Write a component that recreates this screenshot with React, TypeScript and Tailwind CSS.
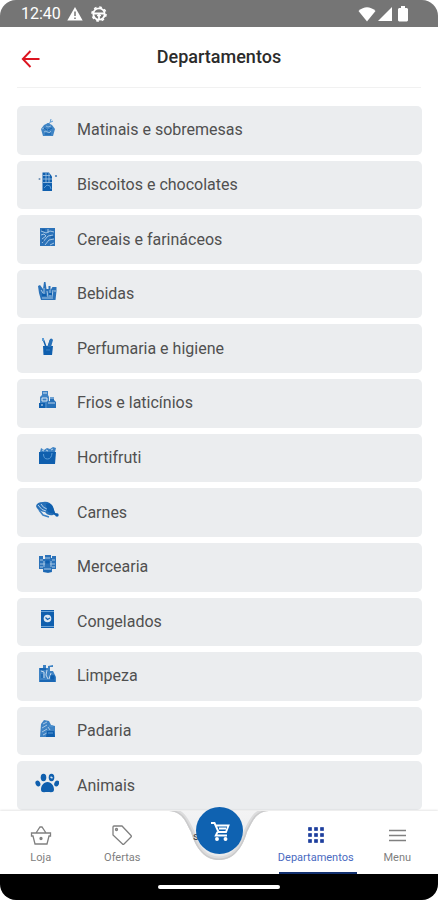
import type { ReactNode } from "react";
import { useState } from "react";

const BLUE = "#0f5fae";
const LIGHT = "#5b9bd5";
const PALE = "#d6e4f1";

type Department = {
  name: string;
  slug: string;
  icon: ReactNode;
};

const departments: Department[] = [
  {
    name: "Matinais e sobremesas",
    slug: "matinais",
    icon: (
      <>
        <path d="M12 8l3-1 1-4M16 6l2-1" stroke={LIGHT} fill="none" />
        <path d="M6 13l3-4 4-2 4 2 3 4-2 7H8z" fill="#3f84c4" />
        <path d="M7 13l2-1M11 10l2 1 3-1M9 16l2-1 3 2 2-2" stroke="#a5c6e4" strokeWidth=".8" fill="none" />
        <path d="M9 12l3 2M13 14l4-2M10 18h6" stroke={BLUE} fill="none" />
      </>
    ),
  },
  {
    name: "Biscoitos e chocolates",
    slug: "biscoitos",
    icon: (
      <>
        <path d="M7.500 1.500H14l3 4V20H7.500z" fill={BLUE} />
        <path d="M8 4.500h7M8 8h9M8 11.500h9M11 2v10M14 2v10" stroke="#a5c6e4" strokeWidth=".8" />
        <path d="M9 17l3-3 3 1 1 3" stroke={LIGHT} fill="none" />
        <circle cx="4.500" cy="8" r="1" fill="#6d8fb3" />
        <circle cx="21" cy="5" r="1.100" fill="#4a7fb8" />
      </>
    ),
  },
  {
    name: "Cereais e farináceos",
    slug: "cereais",
    icon: (
      <>
        <path d="M5 2h15v18H5z" fill="#2b72b9" />
        <path d="M6 5l5 2 4-2 4 1M6 9l3-1 2 2-4 3M7 17l6-7 5-1M10 19l4-5 5-1M15 19l4-2M13 3v4" stroke="#a5c6e4" strokeWidth="1" fill="none" />
        <path d="M7 4h3M16 11h3M7 15h2" stroke="#0a4e98" />
      </>
    ),
  },
  {
    name: "Bebidas",
    slug: "bebidas",
    icon: (
      <>
        <path d="M3 6l2-1 3 4 1-7h1.500l1 7h2V6h2v4l2-3h4v4l-1 9H6L4 13z" fill="#2b72b9" />
        <path d="M6 10l2 3M9 8v8M12 11l1 6M15 10v7M18 10l-1 7M7 18h11M19 11h2" stroke="#a5c6e4" strokeWidth="1" />
        <path d="M7 15h4M14 14h3" stroke={BLUE} strokeWidth="2" />
      </>
    ),
  },
  {
    name: "Perfumaria e higiene",
    slug: "perfumaria",
    icon: (
      <>
        <path d="M8 11h10l-1 9H8.500z" fill={BLUE} />
        <path d="M8.500 5L11 12M16 4l-3 8" stroke={BLUE} strokeWidth="1.500" />
        <path d="M14.500 5q2-3 3.500 0l-2 7h-3.500z" fill="#2670b8" />
        <path d="M7 3h2v3H7z" fill={LIGHT} />
        <path d="M11 15h4" stroke="#3a80c3" />
      </>
    ),
  },
  {
    name: "Frios e laticínios",
    slug: "frios",
    icon: (
      <>
        <path d="M7 2h6v4l1 2v11H5V8l2-2z" fill="#3d82c4" />
        <path d="M8 4h4M7 9h5v3H7z" stroke={PALE} fill="none" />
        <path d="M15 12V8h4v3l2 2v6h-9v-6z" fill="#2670b8" />
        <path d="M15 9h4M13 14h7" stroke="#b9d2ea" />
        <path d="M4 14h6v5H4z" fill={BLUE} />
        <path d="M6 16h2" stroke={PALE} />
      </>
    ),
  },
  {
    name: "Hortifruti",
    slug: "hortifruti",
    icon: (
      <>
        <path d="M4 8h17l-1 12H4z" fill={BLUE} />
        <path d="M5 8l1-4 3 2 3-2 3 1 3-2 3 1-1 4z" fill="#3d82c4" />
        <path d="M7 6l2 1M11 6l2 1M16 6l2-1" stroke={PALE} strokeWidth=".8" />
        <path d="M8.500 10q0 5 4 5T17 9" stroke={LIGHT} fill="none" />
      </>
    ),
  },
  {
    name: "Carnes",
    slug: "carnes",
    icon: (
      <>
        <path d="M1 7q1-4 7-4 7-1 10 5l2 6-2 2q-5 1-8-3-8-1-9-6z" fill="#2670b8" />
        <path d="M3 6q4 6 8 6M6 5q2 4 6 5" stroke="#b9d2ea" fill="none" />
        <path d="M11 5q5-2 7 3l2 6q-6 1-8-3z" fill={BLUE} />
        <path d="M4 11l4 5 6 2" stroke="#3d82c4" strokeWidth="1.500" fill="none" />
        <path d="M18 14l4 2" stroke={BLUE} strokeWidth="2" />
        <circle cx="22" cy="16" r="1.700" fill={BLUE} />
      </>
    ),
  },
  {
    name: "Mercearia",
    slug: "mercearia",
    icon: (
      <>
        <path d="M4 3h4v3h2V2h6v3h1V3h4v13h-4v3l-4 1-5-1v-3H4z" fill="#2b72b9" />
        <path d="M5 7h3M5 11h5M15 11h5M10 5h5M17 7h3M9 8v6M16 8v6M5 14h3M17 14h3M9 16h7" stroke="#a5c6e4" strokeWidth="1" />
        <path d="M11 8h3v2h-3zM9 18h7" stroke={BLUE} fill={BLUE} />
      </>
    ),
  },
  {
    name: "Congelados",
    slug: "congelados",
    icon: (
      <>
        <path d="M6 2h13v18H6z" fill={BLUE} />
        <path d="M6 3.500h13M6 18.500h13" stroke="#6aa3d8" />
        <circle cx="12.500" cy="10.500" r="3.800" fill="#dbe7f2" />
        <path d="M10.500 9.500l2 2 2.500-1.500" stroke={BLUE} strokeWidth="1.200" fill="none" />
      </>
    ),
  },
  {
    name: "Limpeza",
    slug: "limpeza",
    icon: (
      <>
        <path d="M4 6h4V3h3v3h2V4l5-1v2h-3v4h3l3 6v5H4z" fill="#3d82c4" />
        <path d="M6 9l3 1v6M12 8l-1 5 2 4M16 11l-2 6" stroke="#c4d9ed" strokeWidth="1" fill="none" />
        <path d="M5 7h6M7 12v4M16 14h3v3h-3zM5 19h15" stroke={BLUE} strokeWidth="1.300" fill={BLUE} />
      </>
    ),
  },
  {
    name: "Padaria",
    slug: "padaria",
    icon: (
      <>
        <path d="M6 7l3-4 5 1 2 4 4 1v11H5z" fill="#3d82c4" />
        <path d="M8 7l4-2M7 11l5-3M7 15l5-3M13 10l2 3M8 18l4-2" stroke="#a5c6e4" />
        <path d="M12 14h7l1 6h-9z" fill={BLUE} />
        <path d="M14 9h4M13 16h5" stroke={LIGHT} />
      </>
    ),
  },
  {
    name: "Animais",
    slug: "animais",
    icon: (
      <>
        <path d="M12.500 10c4 0 6.500 4 6.500 7.500 0 3.500-3 2.500-6.500 2.500S6 21 6 17.500C6 14 8.500 10 12.500 10z" fill={BLUE} />
        <ellipse cx="8.500" cy="5.500" rx="2.800" ry="3.700" fill={BLUE} />
        <ellipse cx="16.500" cy="5.500" rx="2.800" ry="3.700" fill={BLUE} />
        <ellipse cx="2.900" cy="11.500" rx="2.300" ry="3.100" transform="rotate(-25 2.900 11.500)" fill={BLUE} />
        <ellipse cx="21.700" cy="11.500" rx="2.300" ry="3.100" transform="rotate(25 21.700 11.500)" fill={BLUE} />
        <path d="M15.500 5l2 1" stroke={PALE} strokeWidth="1.500" />
      </>
    ),
  },
];

function StatusBar() {
  return (
    <div className="flex h-[27px] shrink-0 items-center rounded-t-2xl bg-[#757575] pr-[29px] pl-[21px] text-white">
      <span className="text-base leading-5">12:40</span>
      <svg className="ml-1.5 h-4 w-4" viewBox="0 0 16 16">
        <path d="M8 1L15.700 14.500H.3z" fill="currentColor" />
        <path d="M8 5.500V10M8 11.500V13" stroke="#757575" strokeWidth="1.500" />
      </svg>
      <svg className="ml-2 h-4 w-4" viewBox="0 0 16 16" fill="none" stroke="currentColor">
        <circle cx="8" cy="8" r="5.700" strokeWidth="1.800" />
        <circle cx="8" cy="8" r="7" strokeWidth="1.600" strokeDasharray="2.750 2.750" />
        <path d="M3 7.500h10M8 8v5" strokeWidth="1.800" />
        <path d="M6 9.500h4" strokeWidth="1.500" />
      </svg>
      <div className="ml-auto flex items-center">
        <svg className="h-4 w-[18px]" viewBox="0 0 18 16" fill="currentColor">
          <path d="M9 15.500L.5 5Q9-2.500 17.500 5z" />
        </svg>
        <svg className="ml-px h-4 w-4" viewBox="0 0 16 16" fill="currentColor">
          <path d="M1 15L15 1v14z" />
        </svg>
        <svg className="ml-1 h-4 w-3" viewBox="0 0 12 16" fill="currentColor">
          <path d="M4 0h4v2h2l1 1v11.500l-1 1H2l-1-1V3l1-1h2z" />
        </svg>
      </div>
    </div>
  );
}

function NavItem({
  label,
  active,
  onClick,
  children,
}: {
  label: string;
  active?: boolean;
  onClick: () => void;
  children: ReactNode;
}) {
  return (
    <button
      type="button"
      onClick={onClick}
      className={`relative flex min-w-0 flex-1 flex-col items-center gap-[3px] pt-3 text-[11px] leading-4 ${
        active ? "text-[#4a6abf]" : "text-[#808080]"
      }`}
    >
      <svg className="h-6 w-6" viewBox="0 0 24 24" fill="none" stroke="currentColor" strokeWidth="1.300">
        {children}
      </svg>
      {label}
      {active && <span className="absolute right-0 bottom-0 left-1 h-0.5 bg-[#12306f]" />}
    </button>
  );
}

export default function App() {
  const [tab, setTab] = useState("departamentos");

  return (
    <div className="flex min-h-screen flex-col bg-white font-['Roboto',sans-serif]">
      <StatusBar />

      <header className="mx-[17px] flex h-[61px] shrink-0 items-center border-b border-[#f1f1f1]">
        <button type="button" aria-label="Voltar" className="ml-1 flex-none pt-1 text-[#dc1420]">
          <svg className="h-5 w-5" viewBox="0 0 20 20" fill="none" stroke="currentColor" strokeWidth="1.900">
            <path d="M18.500 10H2M9.500 2L1.800 10l7.700 8" />
          </svg>
        </button>
        <h1 className="flex-1 pr-6 text-center text-lg font-medium text-[#2b2b2b]">Departamentos</h1>
      </header>

      <ul className="mx-4 mt-[18px] mb-px grid flex-1 auto-rows-fr gap-1.5 pl-px">
        {departments.map(({ name, slug, icon }) => (
          <li key={slug} className="flex">
            <a
              href={`#${slug}`}
              className="flex flex-1 items-center gap-[18px] rounded-[5px] bg-[#ebedef] pl-[18px] text-base text-[#505050]"
            >
              <svg className="mb-1 h-6 w-6" viewBox="0 0 24 24">
                {icon}
              </svg>
              {name}
            </a>
          </li>
        ))}
      </ul>

      <nav className="sticky bottom-0 shrink-0">
        <div className="flex h-[63px] bg-white shadow-[0_-1px_2px_rgba(0,0,0,0.1)]">
          <NavItem label="Loja" active={tab === "loja"} onClick={() => setTab("loja")}>
            <path d="M2.500 10h19v3H20l-2 8H6l-2-8H2.500zM7 10l4-6h2l4 6" />
            <circle cx="12" cy="15.500" r="1" fill="currentColor" />
          </NavItem>
          <NavItem label="Ofertas" active={tab === "ofertas"} onClick={() => setTab("ofertas")}>
            <path d="M3 4q0-1 1-1h8l9 9.500q.8.8 0 1.500l-7 7q-.8.8-1.500 0L3 12z" />
            <circle cx="6.500" cy="6.500" r="1" />
          </NavItem>

          <div className="relative w-28 flex-none">
            <svg className="absolute top-0 left-0 h-[63px] w-28" viewBox="0 0 112 63">
              <defs>
                <linearGradient id="notch" x1="0" y1="0" x2="0" y2="1">
                  <stop offset="0" stopColor="#f3f3f4" />
                  <stop offset="1" stopColor="#e6e7e8" />
                </linearGradient>
                <clipPath id="notchClip">
                  <path d="M6 0C19 1 22 9 28 21C33 39 43 49 56 49S79 39 84 21C90 9 93 1 106 0Z" />
                </clipPath>
              </defs>
              <g clipPath="url(#notchClip)">
                <path d="M0 0h112v63H0z" fill="url(#notch)" />
                <path d="M6 0C19 1 22 9 28 21C33 39 43 49 56 49S79 39 84 21C90 9 93 1 106 0" fill="none" stroke="#dcdcdd" strokeWidth="7" />
                <path d="M6 0C19 1 22 9 28 21C33 39 43 49 56 49S79 39 84 21C90 9 93 1 106 0" fill="none" stroke="#cbcbcc" strokeWidth="3" />
              </g>
            </svg>
            <span className="absolute top-4 left-[30px] text-[11px] leading-5 text-[#444444]">s</span>
            <button
              type="button"
              aria-label="Carrinho"
              className="absolute -top-1 left-[33px] flex h-[47px] w-[47px] items-center justify-center rounded-full bg-[#0f62b1] text-white"
            >
              <svg className="h-5 w-5" viewBox="0 0 20 20" fill="none" stroke="currentColor" strokeWidth="1.900">
                <path d="M1 2h3.500l4 9h7.500l2.500-6.500H6M7.500 11L5.800 14.500H17M9 7.500h7" />
                <circle cx="7" cy="18" r="1" fill="currentColor" />
                <circle cx="15.500" cy="18" r="1" fill="currentColor" />
              </svg>
            </button>
          </div>

          <NavItem
            label="Departamentos"
            active={tab === "departamentos"}
            onClick={() => setTab("departamentos")}
          >
            <path
              d="M4.500 4.500h3v3h-3zM10.500 4.500h3v3h-3zM16.500 4.500h3v3h-3zM4.500 10.500h3v3h-3zM10.500 10.500h3v3h-3zM16.500 10.500h3v3h-3zM4.500 16.500h3v3h-3zM10.500 16.500h3v3h-3zM16.500 16.500h3v3h-3z"
              fill="#1e3f9e"
              stroke="#1e3f9e"
              strokeWidth=".7"
            />
          </NavItem>
          <NavItem label="Menu" active={tab === "menu"} onClick={() => setTab("menu")}>
            <path d="M4 7.500h17M4 12.500h17M4 17.500h17" />
          </NavItem>
        </div>

        <div className="flex h-[26px] items-center justify-center rounded-b-2xl bg-black">
          <span className="h-1 w-[122px] rounded-full bg-white" />
        </div>
      </nav>
    </div>
  );
}
